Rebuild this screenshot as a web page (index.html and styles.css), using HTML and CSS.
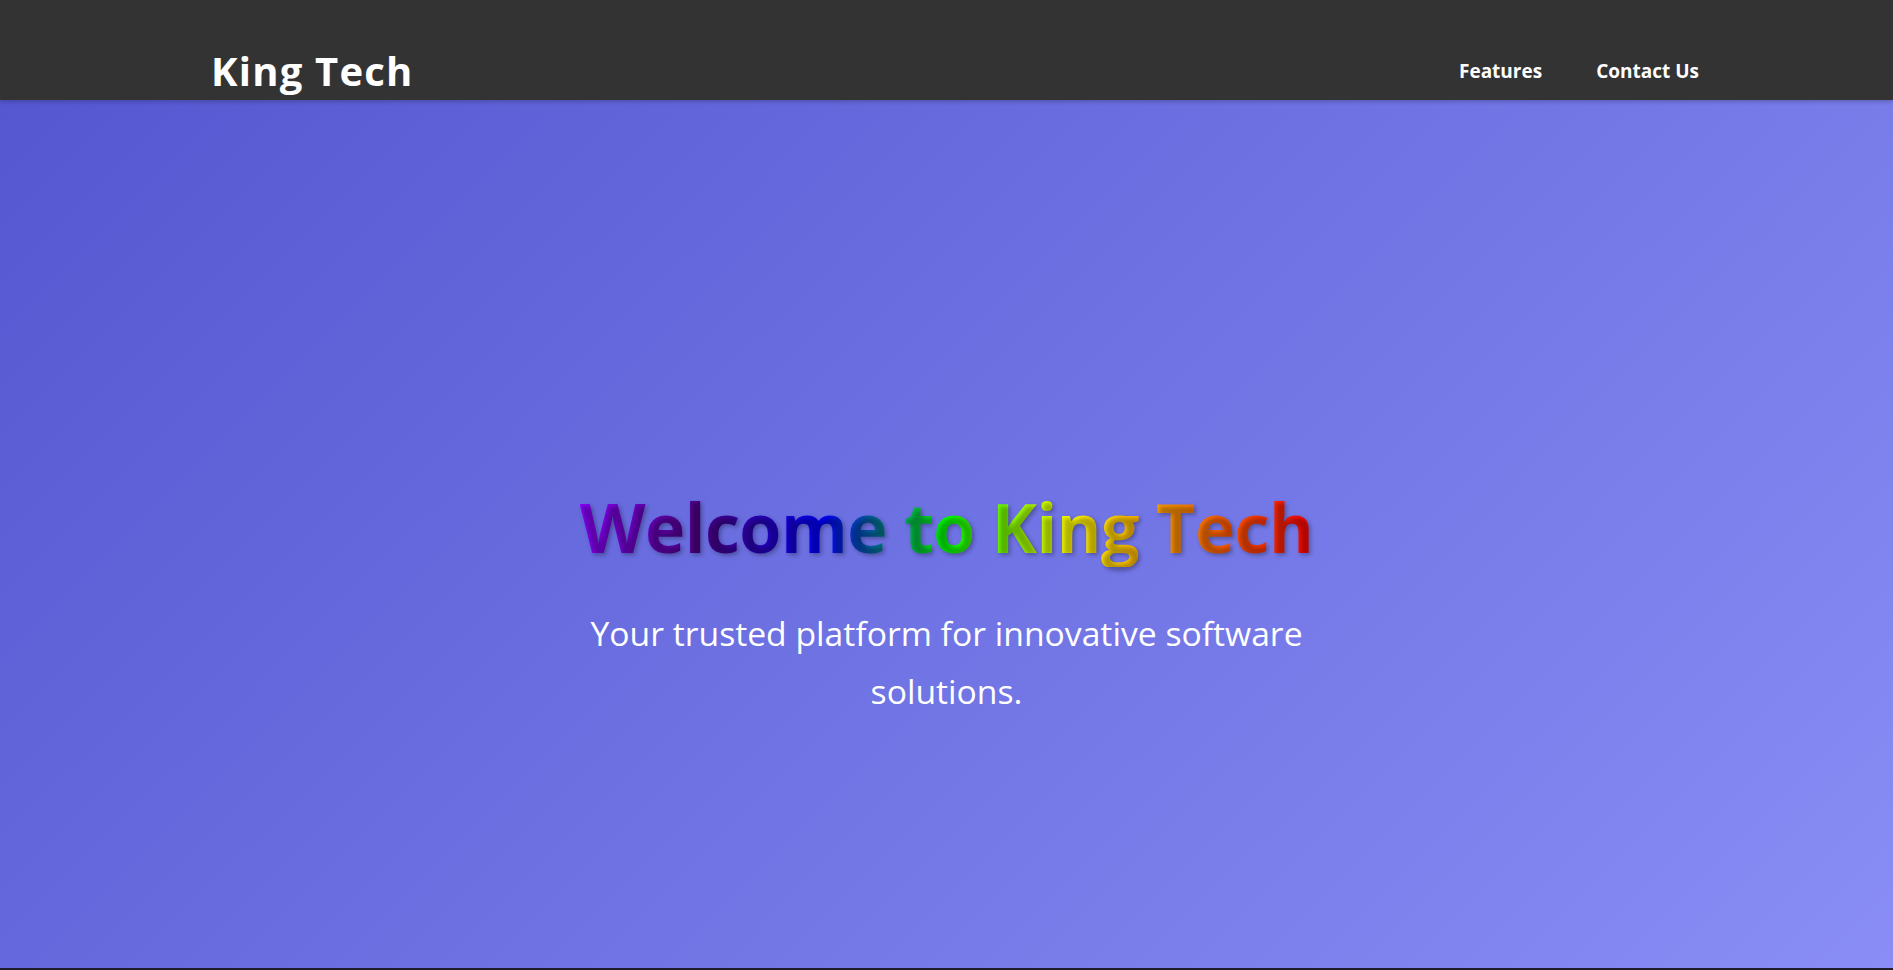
FILE: index.html
```html
<!DOCTYPE html>
<html lang="en">
<head>
<meta charset="UTF-8">
<title>King Tech</title>
<link rel="stylesheet" href="styles.css">
</head>
<body>
  <header class="site-header">
    <div class="logo">King Tech</div>
    <nav class="nav">
      <a href="#features" class="nav-link">Features</a>
      <a href="#contact" class="nav-link">Contact Us</a>
    </nav>
  </header>
  <main class="hero">
    <h1 class="hero-title">Welcome to King Tech</h1>
    <p class="hero-subtitle">Your trusted platform for innovative software solutions.</p>
  </main>
</body>
</html>
```

FILE: styles.css
```css
* {
  box-sizing: border-box;
}

html, body {
  margin: 0;
  padding: 0;
}

body {
  font-family: "Open Sans", "Noto Sans", sans-serif;
  background: #1d1d2b;
  height: 100vh;
  overflow: hidden;
  display: flex;
  flex-direction: column;
}

.site-header {
  height: 100px;
  flex: none;
  background: #333333;
  padding: 42px 194px 0 211px;
  display: flex;
  align-items: center;
  justify-content: space-between;
  position: relative;
  z-index: 1;
  box-shadow: 0 2px 4px rgba(0, 0, 0, 0.2);
}

.logo {
  color: #ffffff;
  font-size: 40px;
  font-weight: 700;
  letter-spacing: 1.2px;
  line-height: 1;
}

.nav {
  display: flex;
  gap: 54px;
}

.nav-link {
  color: #ffffff;
  text-decoration: none;
  font-weight: 700;
  font-size: 19px;
}

.hero {
  flex: 1;
  margin-bottom: 2px;
  padding-top: 138px;
  background: linear-gradient(135deg, #5457d0 0%, #898df5 100%);
  display: flex;
  flex-direction: column;
  align-items: center;
  justify-content: center;
  text-align: center;
  color: #ffffff;
}

.hero-title {
  display: inline-block;
  margin: 0 0 37px;
  font-size: 68px;
  letter-spacing: -0.5px;
  font-weight: 700;
  line-height: 1.2;
  background: linear-gradient(to right, #8b00ff, #4b0082, #0000ff, #00ff00, #ffff00, #ff7f00, #ff0000);
  -webkit-background-clip: text;
  background-clip: text;
  -webkit-text-fill-color: transparent;
  color: transparent;
  text-shadow: 2px 2px 4px rgba(0, 0, 0, 0.3);
}

.hero-subtitle {
  margin: 0;
  max-width: 800px;
  font-size: 33.7px;
  line-height: 58px;
}
```
